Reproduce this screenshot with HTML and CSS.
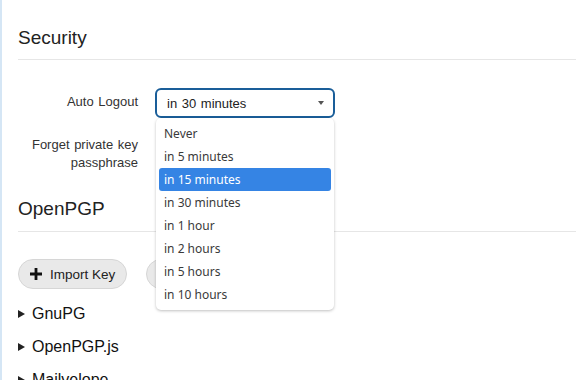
FILE: index.html
```html
<!DOCTYPE html>
<html lang="en">
<head>
  <meta charset="UTF-8" />
  <title>Mailvelope - Options</title>
  <link rel="stylesheet" href="styles.css">
</head>
<body>
  <div class="page">
    <section class="section">
      <h2 class="section-title">Security</h2>
      <div class="form-row">
        <label class="form-label" for="autoLogout">Auto Logout</label>
        <div class="select-wrap">
          <div class="select select-open" id="autoLogout">
            <span>in 30 minutes</span>
            <span class="select-arrow"></span>
          </div>
          <ul class="dropdown">
            <li>Never</li>
            <li>in 5 minutes</li>
            <li class="active">in 15 minutes</li>
            <li>in 30 minutes</li>
            <li>in 1 hour</li>
            <li>in 2 hours</li>
            <li>in 5 hours</li>
            <li>in 10 hours</li>
          </ul>
        </div>
      </div>
      <div class="form-row form-row-tall">
        <label class="form-label">Forget private key passphrase</label>
        <div class="select select-hidden">
          <span>in 15 minutes</span>
          <span class="select-arrow"></span>
        </div>
      </div>
    </section>

    <section class="section section-next">
      <h2 class="section-title">OpenPGP</h2>
      <div class="actions">
        <button class="btn">
          <svg class="btn-icon" viewBox="0 0 12 12" width="12" height="12">
            <path d="M4.6 0h2.8v4.6H12v2.8H7.4V12H4.6V7.4H0V4.6h4.6z" fill="#111"/>
          </svg>
          Import Key
        </button>
        <button class="btn">
          <svg class="btn-icon" viewBox="0 0 12 12" width="12" height="12">
            <path d="M4.6 0h2.8v4.6H12v2.8H7.4V12H4.6V7.4H0V4.6h4.6z" fill="#111"/>
          </svg>
          Generate Key
        </button>
      </div>
      <details class="engine"><summary>GnuPG</summary></details>
      <details class="engine"><summary>OpenPGP.js</summary></details>
      <details class="engine"><summary>Mailvelope</summary></details>
    </section>
  </div>
</body>
</html>
```

FILE: styles.css
```css
* {
  box-sizing: border-box;
}

html, body {
  margin: 0;
  background: #fff;
  color: #222;
  font-family: "Liberation Sans", Arial, sans-serif;
}

.page {
  border-left: 2px solid #d5e6f5;
  min-height: 380px;
  padding: 0 0 0 16px;
}

.section-title {
  margin: 0;
  padding: 26px 0 9px;
  font-size: 19px;
  line-height: 24px;
  font-weight: 400;
  color: #222;
  border-bottom: 1px solid #e6e6e6;
}

.section-next .section-title {
  padding-top: 25px;
  padding-bottom: 10px;
}

.form-row {
  display: flex;
  align-items: flex-start;
  gap: 17px;
  margin-top: 28px;
}

.form-row-tall {
  margin-top: 13px;
}

.form-label {
  width: 120px;
  flex-shrink: 0;
  text-align: right;
  font-size: 13px;
  line-height: 18px;
  color: #333;
  padding-top: 5px;
  word-spacing: 1px;
}

.select-wrap {
  position: relative;
}

.select {
  width: 180px;
  height: 30px;
  border: 1px solid #ccc;
  border-radius: 6px;
  display: flex;
  align-items: center;
  justify-content: space-between;
  padding: 0 9px 0 10px;
  font-size: 13px;
  color: #222;
  word-spacing: 1px;
}

.select-open {
  border: 2px solid #1a5e99;
}

.select-hidden {
  width: 178px;
  margin-left: 1px;
}

.select-arrow {
  width: 0;
  height: 0;
  border-left: 3px solid transparent;
  border-right: 3px solid transparent;
  border-top: 4px solid #555;
}

.dropdown {
  position: absolute;
  top: 30px;
  left: 1px;
  width: 178px;
  margin: 0;
  padding: 4px 3px;
  list-style: none;
  background: #fff;
  border-radius: 5px;
  box-shadow: 0 1px 3px rgba(0, 0, 0, 0.25);
  font-family: "Noto Sans", sans-serif;
  font-size: 12px;
  color: #3a3a3a;
  z-index: 2;
}

.dropdown li {
  height: 23px;
  line-height: 23px;
  padding-left: 5px;
  border-radius: 3px;
}

.dropdown li.active {
  background: #3584e4;
  color: #fff;
}

.actions {
  display: flex;
  gap: 19px;
  margin: 27px 0 9px;
}

.btn {
  display: flex;
  align-items: center;
  gap: 8px;
  height: 30px;
  padding: 0 11px;
  border: 1px solid #d6d6d6;
  border-radius: 15px;
  background: #e9e9e9;
  font-family: "Liberation Sans", Arial, sans-serif;
  font-size: 13.5px;
  color: #222;
}

.engine summary {
  font-size: 16px;
  line-height: 20px;
  padding: 6px 0 7px;
  color: #111;
  list-style: none;
  display: flex;
  align-items: center;
}

.engine summary::before {
  content: "";
  width: 0;
  height: 0;
  border-top: 4px solid transparent;
  border-bottom: 4px solid transparent;
  border-left: 7px solid #222;
  margin-right: 7px;
}
```
